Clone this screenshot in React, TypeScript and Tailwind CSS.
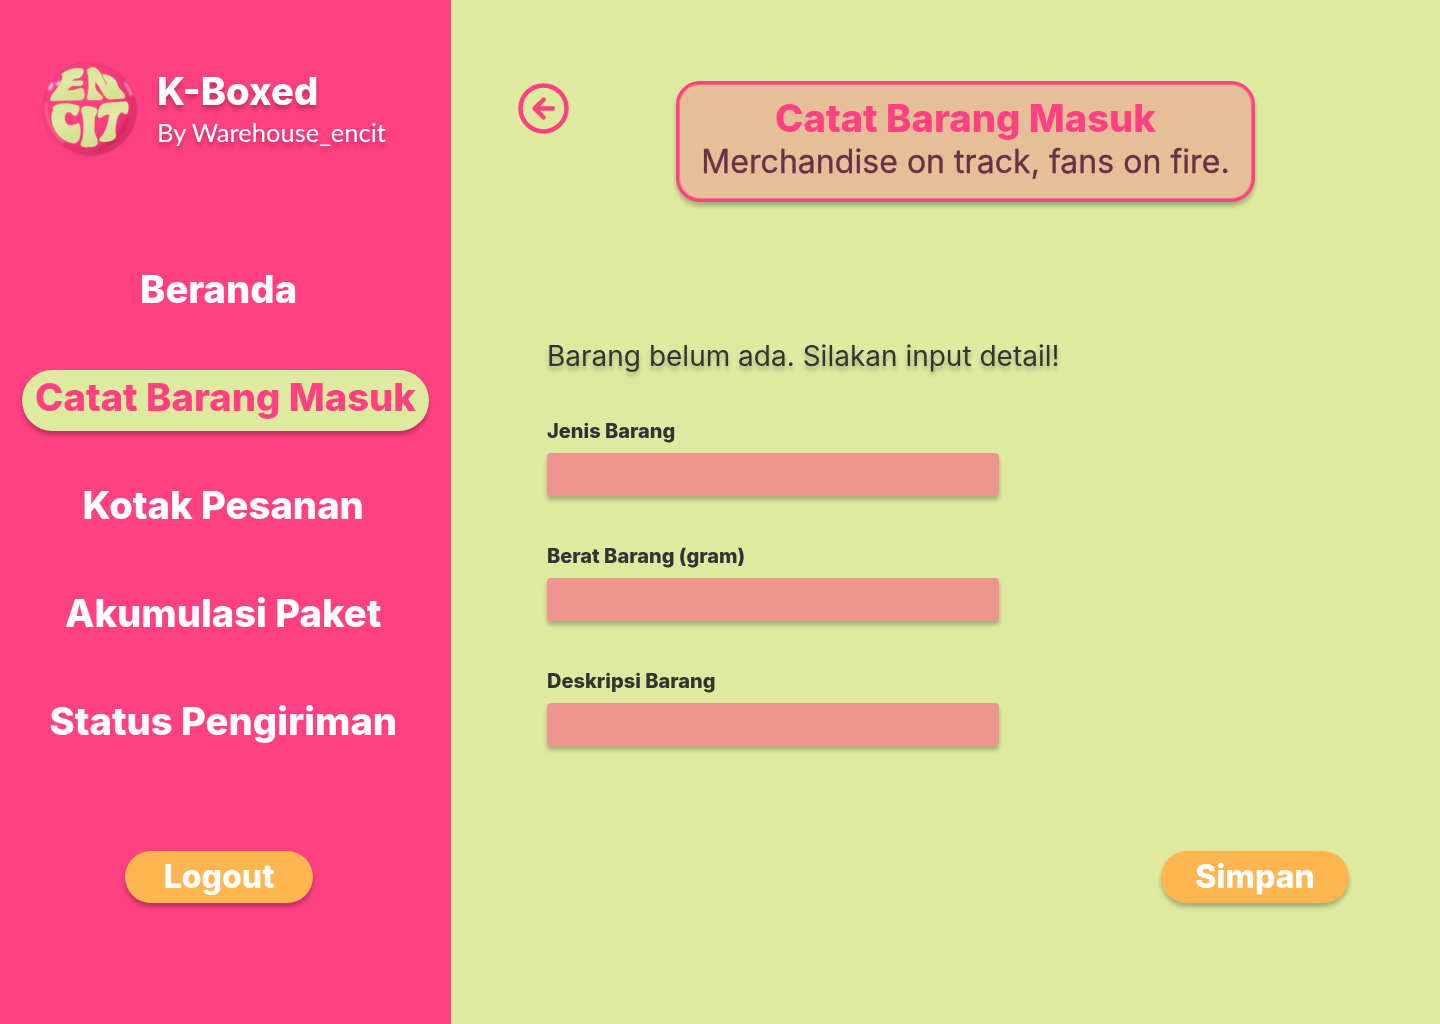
import React from "react";

const softShadow = "shadow-[0_4px_4px_rgba(0,0,0,0.25)]";
const textShadow = "[text-shadow:0_4px_4px_rgba(0,0,0,0.25)]";

function Logo() {
  return (
    <svg width="112" height="112" viewBox="0 0 336 336" className="block shrink-0" aria-label="Encit">
      <defs>
        <radialGradient id="disc" cx="0.42" cy="0.4" r="0.62">
          <stop offset="0" stopColor="#ff4485" />
          <stop offset="0.6" stopColor="#fb3d80" />
          <stop offset="0.85" stopColor="#ea2f70" />
          <stop offset="1" stopColor="#d8316c" />
        </radialGradient>
        <linearGradient id="rim" x1="0" y1="0" x2="1" y2="1">
          <stop offset="0" stopColor="#c93569" />
          <stop offset="0.5" stopColor="#f0568c" />
          <stop offset="1" stopColor="#c5285f" />
        </linearGradient>
        <linearGradient id="cream" x1="0" y1="0" x2="0.3" y2="1">
          <stop offset="0" stopColor="#dbe398" />
          <stop offset="0.5" stopColor="#e0eaa4" />
          <stop offset="1" stopColor="#d6df92" />
        </linearGradient>
        <filter id="blur" x="-50%" y="-50%" width="200%" height="200%">
          <feGaussianBlur stdDeviation="3" />
        </filter>
      </defs>
      <circle cx="168" cy="166" r="140" fill="#a82a58" opacity="0.4" filter="url(#blur)" />
      <circle cx="168" cy="164" r="140" fill="url(#disc)" stroke="url(#rim)" strokeWidth="3" />
      <g filter="url(#blur)">
        <path d="M286 188C276 242 232 284 178 290C228 270 254 238 286 188Z" fill="#cf1f5f" opacity="0.8" />
        <path d="M36 146C34 192 52 238 90 266" fill="none" stroke="#ff8fb4" strokeWidth="6" opacity="0.75" />
        <path d="M48 104L54 90M70 90L78 86" fill="none" stroke="#ffe3ec" strokeWidth="9" strokeLinecap="round" />
        <path d="M274 88Q286 104 292 122" fill="none" stroke="#ffabc7" strokeWidth="7" strokeLinecap="round" />
      </g>
      <g fill="url(#cream)" stroke="#dcb98a" strokeWidth="1.5" strokeLinejoin="round">
        <path d="M82 61C98 46 118 42 142 43C151 44 150 58 143 66C136 75 129 73 122 74L114 80C124 82 141 77 146 82C150 88 145 94 138 96C129 97 118 94 111 97L101 108C118 112 130 103 142 102C151 103 152 116 151 127C150 137 142 139 130 139L53 141C46 139 50 128 56 119C66 105 78 94 83 79C86 70 86 66 82 61Z" />
        <path d="M159 49C165 39 177 37 187 43C202 54 207 75 219 95C222 85 205 74 206 61C217 60 237 67 247 82C252 95 252 99 261 109C268 116 275 123 272 132C261 137 246 133 232 136C216 138 210 122 203 112C197 100 190 90 185 84C181 96 184 108 196 118C206 126 212 137 199 138L163 138C156 133 160 124 162 116C165 96 165 72 159 49Z" />
        <path d="M56 160C68 147 96 145 117 151L134 155C139 164 134 178 126 185C118 189 115 176 105 174C92 174 89 194 96 206C103 219 119 214 132 207C139 210 140 226 139 240C137 257 133 266 120 268C84 266 47 225 53 181C54 171 60 168 56 160Z" />
        <path d="M144 161C154 153 175 156 188 164C194 173 184 181 182 193L181 232C183 246 194 255 191 270C186 280 158 281 145 278C137 274 140 266 146 256C149 237 150 205 146 186C144 175 138 169 144 161Z" />
        <path d="M205 151C222 143 239 146 255 144L275 142C285 145 286 166 280 178C275 186 270 174 261 176C249 183 246 207 244 231C244 240 249 245 244 252C235 263 211 266 200 262C191 258 198 251 205 244C217 231 222 205 226 183C217 178 207 188 198 192C190 193 191 181 193 171C195 162 198 156 205 151Z" />
      </g>
    </svg>
  );
}

function BackIcon() {
  return (
    <svg width="51" height="51" viewBox="0 0 51 51" fill="none" stroke="#ff4081" className="block">
      <circle cx="25.5" cy="25.4" r="23" strokeWidth="4.5" />
      <path d="M34.8 25.4H16.6M25.6 16.6L16.6 25.4L25.6 34.5" strokeWidth="4.5" strokeLinecap="round" strokeLinejoin="round" />
    </svg>
  );
}

const navText = "text-[38.2px] leading-[46px] font-extrabold whitespace-nowrap";

function Field({ label }: { label: string }) {
  return (
    <label className="block h-[125px] w-[452px]">
      <span className="block h-[34px] text-[20px] leading-6 font-extrabold text-[#333333]">{label}</span>
      <input className={`block h-[43px] w-full rounded-[4px] bg-[#ef9590] px-3 outline-none ${softShadow}`} />
    </label>
  );
}

export default function App() {
  return (
    <div className="flex h-[1024px] w-[1440px] overflow-hidden bg-[#deea9f] font-['Inter',sans-serif]">
      <aside className="flex w-[451px] shrink-0 flex-col bg-[#ff4081] text-white">
        <div className="flex h-[266px] items-start pt-[54px] pl-[34px]">
          <Logo />
          <div className={`ml-[11px] pt-[14px] whitespace-nowrap ${textShadow}`}>
            <h1 className="text-[38.2px] leading-[46px] font-extrabold">K-Boxed</h1>
            <p className="mt-[3px] font-['Lato',sans-serif] text-[25.5px] leading-[31px]">By Warehouse_encit</p>
          </div>
        </div>
        <nav className="flex flex-col">
          <a className={`h-[104px] pl-[140px] ${navText}`}>Beranda</a>
          <a className={`ml-[22px] h-[61px] w-[407px] rounded-[31px] bg-[#deea9f] pt-[4px] text-center text-[#ff4081] ${navText} ${softShadow}`}>Catat Barang Masuk</a>
          <a className={`mt-[51px] h-[108px] pl-[82.5px] ${navText}`}>Kotak Pesanan</a>
          <a className={`h-[108px] pl-[65px] ${navText}`}>Akumulasi Paket</a>
          <a className={`h-[108px] pl-[49.5px] ${navText}`}>Status Pengiriman</a>
        </nav>
        <button className={`mt-[45px] ml-[125px] h-[52px] w-[188px] rounded-full bg-[#ffb550] text-[32px] leading-[52px] font-extrabold ${softShadow}`}>Logout</button>
      </aside>
      <main className="flex flex-1 flex-col">
        <header className="flex h-[339px] items-start pt-[81px] pl-[67px]">
          <button className="mt-[2px]"><BackIcon /></button>
          <div className="ml-[107px] h-[121px] w-[579px] rounded-[24px] border-[3px] border-[#ff4081] bg-[#e6bf98] pt-[11px] text-center whitespace-nowrap shadow-[0_4px_4px_rgba(0,0,0,0.25),inset_0_0_0_1px_rgba(255,64,129,0.6)]">
            <h2 className="text-[38.2px] leading-[46px] font-extrabold text-[#ff4081]">Catat Barang Masuk</h2>
            <p className="mt-px text-[32px] leading-[39px] tracking-[0.04px] text-[#673147] [-webkit-text-stroke:0.35px_#673147]">Merchandise on track, fans on fire.</p>
          </div>
        </header>
        <section className="pl-24">
          <p className={`h-[80px] text-[28px] leading-[34px] text-[#333333] ${textShadow}`}>Barang belum ada. Silakan input detail!</p>
          <Field label="Jenis Barang" />
          <Field label="Berat Barang (gram)" />
          <Field label="Deskripsi Barang" />
        </section>
        <button className={`mt-[57px] ml-[710px] h-[52px] w-[188px] rounded-full bg-[#ffb550] text-[32px] leading-[52px] font-extrabold text-white ${softShadow}`}>Simpan</button>
      </main>
    </div>
  );
}
